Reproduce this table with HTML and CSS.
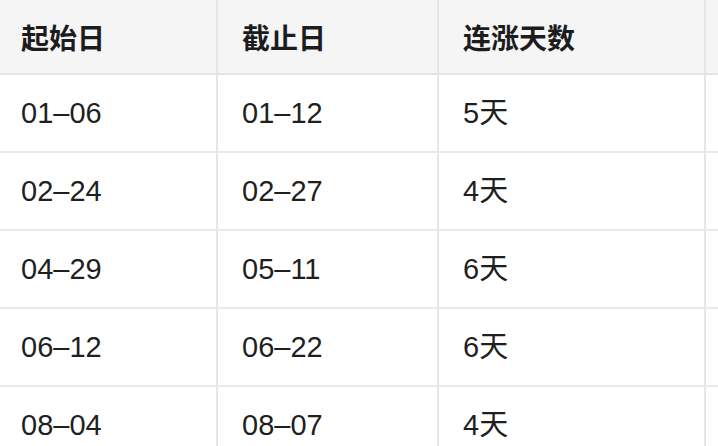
FILE: index.html
```html
<!DOCTYPE html>
<html lang="zh-CN">
<head>
<meta charset="utf-8">
<title>连涨统计</title>
<link rel="stylesheet" href="styles.css">
</head>
<body>
<div class="table">
  <div class="cell head first">起始日</div>
  <div class="cell head">截止日</div>
  <div class="cell head">连涨天数</div>
  <div class="cell head last"></div>

  <div class="cell first">01–06</div>
  <div class="cell">01–12</div>
  <div class="cell">5天</div>
  <div class="cell last"></div>

  <div class="cell first">02–24</div>
  <div class="cell">02–27</div>
  <div class="cell">4天</div>
  <div class="cell last"></div>

  <div class="cell first">04–29</div>
  <div class="cell">05–11</div>
  <div class="cell">6天</div>
  <div class="cell last"></div>

  <div class="cell first">06–12</div>
  <div class="cell">06–22</div>
  <div class="cell">6天</div>
  <div class="cell last"></div>

  <div class="cell first">08–04</div>
  <div class="cell">08–07</div>
  <div class="cell">4天</div>
  <div class="cell last"></div>
</div>
</body>
</html>
```

FILE: styles.css
```css
html, body {
  margin: 0;
  padding: 0;
  background: #ffffff;
  overflow: hidden;
}

body {
  width: 718px;
  height: 446px;
  font-family: "Liberation Sans", "Noto Sans CJK SC", sans-serif;
  color: #1f1f1f;
}

.table {
  display: grid;
  grid-template-columns: 218px 221px 267px 1fr;
  grid-template-rows: 75px repeat(5, 78px);
}

.cell {
  display: flex;
  align-items: center;
  padding-left: 24px;
  border-right: 2px solid #e6e6e6;
  border-bottom: 2px solid #e9e9e9;
  font-size: 29px;
  line-height: 1;
  white-space: nowrap;
  box-sizing: border-box;
}

.cell.first {
  padding-left: 21px;
}

.cell.last {
  border-right: none;
}

.head {
  background: #f5f5f5;
  font-family: "Noto Sans CJK SC", sans-serif;
  font-size: 28px;
  font-weight: 600;
  color: #1c1c1c;
  border-bottom-color: #e4e4e4;
}
```
